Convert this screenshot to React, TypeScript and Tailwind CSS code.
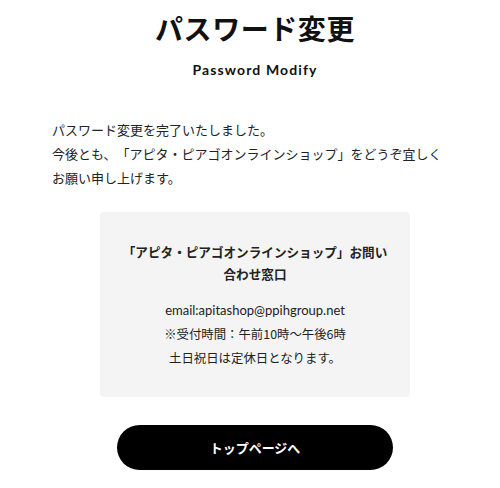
import React from "react";

export default function App() {
  const jp = { fontFamily: '"Noto Sans CJK JP", "Noto Sans", sans-serif' };
  return (
    <div className="w-[500px] h-[488px] bg-white text-[#111] overflow-hidden [text-spacing-trim:space-all]" style={jp}>
      <div className="ml-[52px] w-[406px]">
        <div className="flex flex-col items-center pt-[8px]">
          <h1 className="text-[28px] leading-[40px] font-bold tracking-[0.02em]">パスワード変更</h1>
          <p className="mt-[12px] text-[14px] leading-[20px] font-bold tracking-[0.08em]" style={{ fontFamily: '"Lato", "Noto Sans", sans-serif' }}>
            Password Modify
          </p>
        </div>
        <div className="mt-[38px] text-[13px] leading-[24px] text-[#222]">
          <p>パスワード変更を完了いたしました。</p>
          <p>今後とも、「アピタ・ピアゴオンラインショップ」をどうぞ宜しく</p>
          <p>お願い申し上げます。</p>
        </div>
        <div className="mx-auto mt-[22px] w-[310px] rounded-[4px] bg-[#f4f4f4] pt-[29px] pb-[27px] text-center text-[#222]">
          <p className="text-[12.6px] leading-[22px] font-bold">
            「アピタ・ピアゴオンラインショップ」お問い
            <br />
            合わせ窓口
          </p>
          <div className="mt-[13px] text-[12.4px] leading-[24px]">
            <p className="text-[13px]" style={{ fontFamily: '"Lato", "Noto Sans", sans-serif' }}>email:apitashop@ppihgroup.net</p>
            <p>※受付時間：午前10時～午後6時</p>
            <p>土日祝日は定休日となります。</p>
          </div>
        </div>
        <div className="flex justify-center mt-[28px]">
          <button className="w-[276px] h-[45px] rounded-full bg-black text-white text-[13px] font-bold">
            トップページへ
          </button>
        </div>
      </div>
    </div>
  );
}
